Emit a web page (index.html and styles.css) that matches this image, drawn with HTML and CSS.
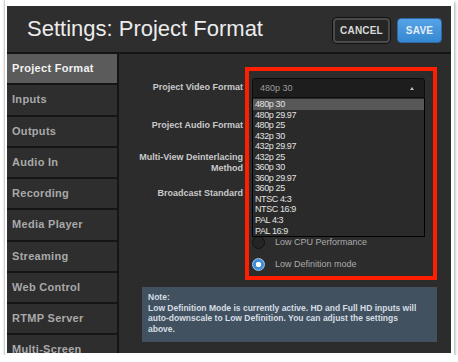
FILE: index.html
```html
<!DOCTYPE html>
<html lang="en">
<head>
  <meta charset="UTF-8" />
  <title>Settings: Project Format</title>
  <link rel="stylesheet" href="styles.css">
</head>
<body>
  <div class="photo">
    <div class="app">
      <div class="header">
        <h1>Settings: Project Format</h1>
        <div class="actions">
          <button class="btn btn-cancel">CANCEL</button>
          <button class="btn btn-save">SAVE</button>
        </div>
      </div>

      <div class="main">
        <ul class="sidebar">
          <li class="active">Project Format</li>
          <li>Inputs</li>
          <li>Outputs</li>
          <li>Audio In</li>
          <li>Recording</li>
          <li>Media Player</li>
          <li>Streaming</li>
          <li>Web Control</li>
          <li>RTMP Server</li>
          <li>Multi-Screen</li>
        </ul>

        <div class="content">
          <div class="row row-video">
            <label class="label">Project Video Format</label>
            <div class="select open">
              <span>480p 30</span>
              <i class="caret"></i>
              <ul class="options">
                <li class="hover">480p 30</li>
                <li>480p 29.97</li>
                <li>480p 25</li>
                <li>432p 30</li>
                <li>432p 29.97</li>
                <li>432p 25</li>
                <li>360p 30</li>
                <li>360p 29.97</li>
                <li>360p 25</li>
                <li>NTSC 4:3</li>
                <li>NTSC 16:9</li>
                <li>PAL 4:3</li>
                <li>PAL 16:9</li>
              </ul>
            </div>
          </div>
          <div class="row row-audio">
            <label class="label">Project Audio Format</label>
            <div class="select"></div>
          </div>
          <div class="row row-multi">
            <label class="label">Multi-View Deinterlacing<br>Method</label>
            <div class="select"></div>
          </div>
          <div class="row row-std">
            <label class="label">Broadcast Standard</label>
            <div class="select"></div>
          </div>
          <div class="row row-radio">
            <span class="label"></span>
            <label class="radio"><i class="dot"></i>Low CPU Performance</label>
          </div>
          <div class="row row-radio2">
            <span class="label"></span>
            <label class="radio checked"><i class="dot"></i>Low Definition mode</label>
          </div>

          <div class="note">
            Note:<br>
            Low Definition Mode is currently active. HD and Full HD inputs will<br>
            auto-downscale to Low Definition. You can adjust the settings<br>
            above.
          </div>

          <div class="highlight"></div>
        </div>
      </div>
    </div>
  </div>
</body>
</html>
```

FILE: styles.css
```css
:root {
  --panel: #2c2c2c;
  --line: #151515;
  --text: #e8e8e8;
  --muted: #a9a9a9;
  --blue: #3f8fd8;
  --red: #ff1f00;
}

body {
  margin: 0;
  background: #fff;
  font-family: "Liberation Sans", Arial, sans-serif;
}

.photo {
  width: 445px;
  height: 347px;
  margin-left: 4px;
  padding: 6px 2px 2px 2px;
  background: #fff;
  border-left: 1px solid #d0d0d0;
  box-shadow: 1px 2px 3px rgba(0, 0, 0, 0.35);
}

.app {
  width: 444px;
  height: 347px;
  background: var(--panel);
  display: flex;
  flex-direction: column;
  overflow: hidden;
}

/* header */
.header {
  height: 46px;
  flex: none;
  border-bottom: 2px solid var(--line);
  display: flex;
  align-items: center;
  justify-content: space-between;
  padding: 0 9px 0 20px;
  background: #2e2e2e;
}

h1 {
  margin: 0;
  font-size: 22px;
  font-weight: normal;
  line-height: 46px;
  color: #ececec;
}

.actions {
  display: flex;
  gap: 7px;
  margin-top: 2px;
}

.btn {
  height: 25px;
  padding: 0;
  border-radius: 4px;
  font-family: inherit;
  font-size: 10px;
  font-weight: bold;
  letter-spacing: 0.2px;
}

.btn-cancel {
  width: 57px;
  background: #262626;
  color: #d8d8d8;
  border: 2px solid #4a4a4a;
  box-shadow: 0 0 0 1px #111;
}

.btn-save {
  width: 45px;
  background: linear-gradient(#56a3e6, #3688d2);
  color: #e4eef8;
  border: 1px solid #2b6aa6;
}

/* body */
.main {
  flex: 1;
  display: flex;
  min-height: 0;
}

.sidebar {
  list-style: none;
  margin: 0;
  padding: 0;
  width: 110px;
  flex: none;
  border-right: 2px solid var(--line);
  overflow: hidden;
}

.sidebar li {
  height: 29.25px;
  line-height: 29px;
  border-bottom: 2px solid var(--line);
  padding-left: 5px;
  font-size: 11px;
  font-weight: bold;
  letter-spacing: 0.3px;
  color: var(--muted);
  background: #2e2e2e;
  white-space: nowrap;
}

.sidebar li.active {
  background: #5b5b5b;
  color: #f2f2f2;
}

.content {
  flex: 1;
  position: relative;
  padding-top: 24px;
}

.row {
  display: flex;
  align-items: center;
  height: 20px;
}

.row-audio { margin-top: 18px; }
.row-multi { margin-top: 17px; }
.row-std { margin-top: 11px; }
.row-radio { margin-top: 28px; }
.row-radio2 { margin-top: 2px; }

.label {
  width: 124px;
  flex: none;
  margin-right: 9px;
  text-align: right;
  font-size: 9px;
  font-weight: bold;
  line-height: 11.5px;
  color: #c9c9c9;
}

.select {
  position: relative;
  width: 173px;
  height: 20px;
  box-sizing: border-box;
  background: #1d1d1d;
  border: 1px solid #0c0c0c;
  border-radius: 3px;
  font-size: 9px;
  line-height: 18px;
  color: #9c9c9c;
  padding-left: 7px;
}

.select.open {
  border-radius: 3px 3px 0 0;
  z-index: 2;
}

.caret {
  position: absolute;
  right: 10px;
  top: 8px;
  border: 2.5px solid transparent;
  border-bottom: 3px solid #bdbdbd;
  border-top: 0;
}

.options {
  position: absolute;
  left: -1px;
  top: 19px;
  width: 173px;
  height: 139px;
  box-sizing: border-box;
  margin: 0;
  padding: 1px 0 0;
  list-style: none;
  background: #2a2a2a;
  border: 1px solid #000;
  border-top: 0;
}

.options li {
  height: 10.55px;
  line-height: 10.5px;
  padding-left: 2px;
  font-size: 9px;
  letter-spacing: -0.4px;
  color: #e2e2e2;
}

.options li.hover {
  background: #575757;
}

.radio {
  display: flex;
  align-items: center;
  font-size: 9px;
  color: #ababab;
}

.dot {
  width: 13px;
  height: 13px;
  box-sizing: border-box;
  border-radius: 50%;
  background: #242424;
  border: 1px solid #111;
  margin-right: 10px;
}

.radio.checked .dot {
  background: radial-gradient(circle, #fff 0 2.5px, var(--blue) 3px);
  border: 1px solid #9cc8ee;
}

.note {
  margin: 13px 14px 0 23px;
  height: 55px;
  box-sizing: border-box;
  padding: 5px 6px 0;
  background: #415160;
  font-size: 8.5px;
  font-weight: bold;
  line-height: 10.6px;
  color: #d6dde3;
  white-space: nowrap;
}

/* annotation box drawn on the screenshot */
.highlight {
  position: absolute;
  left: 126px;
  top: 13px;
  width: 192px;
  height: 213px;
  box-sizing: border-box;
  border: 4px solid var(--red);
  z-index: 3;
}
```
